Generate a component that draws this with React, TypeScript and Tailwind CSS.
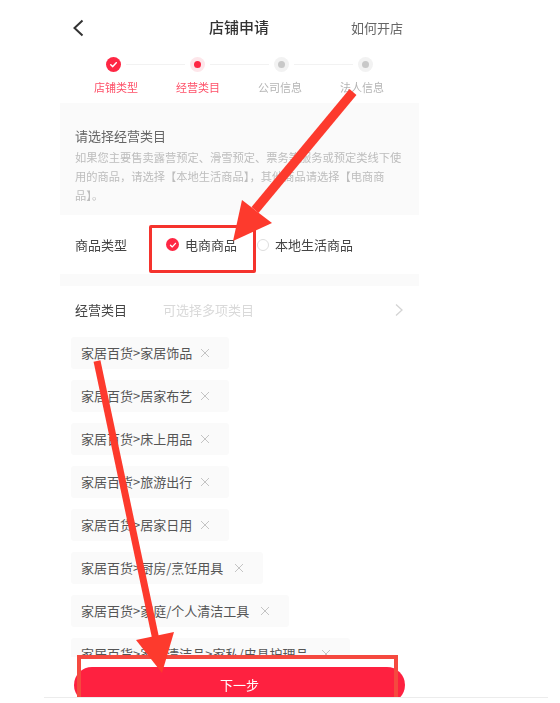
const chips = [
  { text: "家居百货>家居饰品", w: "w-[158px]" },
  { text: "家居百货>居家布艺", w: "w-[158px]" },
  { text: "家居百货>床上用品", w: "w-[158px]" },
  { text: "家居百货>旅游出行", w: "w-[158px]" },
  { text: "家居百货>居家日用", w: "w-[158px]" },
  { text: "家居百货>厨房/烹饪用具", w: "w-[192px]" },
  { text: "家居百货>家庭/个人清洁工具", w: "w-[218px]" },
  { text: "家居百货>家庭清洁品>家私/皮具护理品", w: "w-[279px]" },
]

const steps = [
  { label: "店铺类型", state: "done" },
  { label: "经营类目", state: "active" },
  { label: "公司信息", state: "todo" },
  { label: "法人信息", state: "todo" },
]

const Check = ({ size }: { size: number }) => (
  <svg width={size} height={size} viewBox="0 0 12 12" fill="none" stroke="white" strokeWidth="1.6" strokeLinecap="round" strokeLinejoin="round">
    <path d="M3 6.2 5.2 8.3 9 4" />
  </svg>
)

const Cross = () => (
  <svg width="10" height="10" viewBox="0 0 10 10" stroke="#c4c4c4" strokeWidth="1" className="shrink-0">
    <path d="M1 1 9 9M9 1 1 9" />
  </svg>
)

const StepDot = ({ state }: { state: string }) => {
  if (state === "done")
    return (
      <div className="flex h-[15px] w-[15px] shrink-0 items-center justify-center rounded-full bg-[#fe2744]">
        <Check size={11} />
      </div>
    )
  return (
    <div className={`flex h-[15px] w-[15px] shrink-0 items-center justify-center rounded-full ${state === "active" ? "bg-[#fde6ea]" : "bg-[#f2f2f2]"}`}>
      <div className={`h-[7px] w-[7px] rounded-full ${state === "active" ? "bg-[#fe2744]" : "bg-[#c8c8c8]"}`} />
    </div>
  )
}

export default function App() {
  return (
    <div className="relative h-[703px] w-[560px] overflow-hidden bg-white font-['Noto_Sans_CJK_SC','Liberation_Sans',sans-serif]">
      <div className="ml-[60px] flex h-[697px] w-[359px] flex-col overflow-hidden blur-[0.6px]">
        {/* nav bar */}
        <div className="flex h-[55px] shrink-0 items-center justify-between pl-[11px] pr-[16px]">
          <svg width="14" height="20" viewBox="0 0 14 20" fill="none" stroke="#333" strokeWidth="2">
            <path d="M11.5 2.5 3.5 10l8 7.5" />
          </svg>
          <span className="ml-[42px] text-[15px] font-medium text-[#333]">店铺申请</span>
          <span className="text-[13px] text-[#666]">如何开店</span>
        </div>

        {/* steps */}
        <div className="h-[48px] shrink-0 pt-[2px]">
          <div className="flex items-center pl-[46px]">
            {steps.map((step, i) => (
              <div key={step.label} className="flex items-center">
                <StepDot state={step.state} />
                {i < 3 && <div className="mx-[5px] h-px w-[59px] bg-[#f2f2f2]" />}
              </div>
            ))}
          </div>
          <div className="mt-[7px] flex gap-[38px] pl-[34px]">
            {steps.map((step, i) => (
              <span key={step.label} className={`w-[44px] whitespace-nowrap text-[11px] leading-[16px] ${i < 2 ? "text-[#fe5068]" : "text-[#b5b5b5]"}`}>
                {step.label}
              </span>
            ))}
          </div>
        </div>

        {/* notice */}
        <div className="h-[112px] shrink-0 bg-[#fafafa] px-[15px] pt-[24px]">
          <p className="text-[13px] leading-[18px] text-[#666]">请选择经营类目</p>
          <p className="mt-[3px] text-[11.25px] leading-[19px] text-[#bdbdbd]">
            如果您主要售卖露营预定、滑雪预定、票务等服务或预定类线下使用的商品，请选择【本地生活商品】，其他商品请选择【电商商品】。
          </p>
        </div>

        {/* goods type */}
        <div className="flex h-[59px] shrink-0 items-center px-[15px] text-[13px] text-[#444]">
          <span className="w-[91px]">商品类型</span>
          <div className="flex h-[13px] w-[13px] items-center justify-center rounded-full bg-[#fe2744]">
            <Check size={10} />
          </div>
          <span className="ml-[6px]">电商商品</span>
          <div className="ml-[20px] h-[12px] w-[12px] rounded-full border border-[#ddd]" />
          <span className="ml-[6px]">本地生活商品</span>
        </div>
        <div className="h-[12px] shrink-0 bg-[#fafafa]" />

        {/* category */}
        <div className="flex h-[51px] shrink-0 items-center px-[15px] pb-[3px] text-[13px]">
          <span className="w-[88px] text-[#444]">经营类目</span>
          <span className="flex-1 text-[#d9d9d9]">可选择多项类目</span>
          <svg width="10" height="14" viewBox="0 0 10 14" fill="none" stroke="#d4d4d4" strokeWidth="1.3">
            <path d="M2 1.5 8 7l-6 5.5" />
          </svg>
        </div>
        <div className="flex flex-col gap-[11px] pl-[11px]">
          {chips.map((chip) => (
            <div key={chip.text} className={`flex h-[32px] shrink-0 items-center justify-between rounded-[3px] bg-[#fafafa] pl-[10px] pr-[19px] text-[13px] text-[#555] ${chip.w}`}>
              <span className="whitespace-nowrap">{chip.text}</span>
              <Cross />
            </div>
          ))}
        </div>
      </div>

      {/* bottom action, overlays the list */}
      <div className="absolute left-0 top-[657px] h-[46px] w-full overflow-hidden bg-white">
        <div className="ml-[74px] mt-[10px] flex h-[36px] w-[331px] justify-center rounded-full bg-[#fe2140] pt-[9px] text-[13px] leading-[18px] text-white blur-[0.4px]">
          下一步
        </div>
      </div>
      <div className="absolute left-0 top-[697px] h-[6px] w-full bg-white">
        <div className="ml-[44px] h-px w-[504px] bg-[#ececec]" />
      </div>

      {/* annotations */}
      <div className="absolute left-[149px] top-[225px] h-[48px] w-[107px] rounded-[2px] border-[3px] border-[#f5332d] blur-[0.3px]" />
      <div className="absolute left-[77px] top-[655px] h-[42px] w-[321px] border-x-[4px] border-t-[4px] border-[#f5493f] blur-[0.3px]" />
      <svg className="absolute left-0 top-0 blur-[0.3px]" width="560" height="703" viewBox="0 0 560 703">
        <path d="M353 92 255 210" stroke="#fd3a2d" strokeWidth="9" />
        <path d="M242 200 272 223 233 241Z" fill="#fd3a2d" />
        <path d="M97 361 156 640" stroke="#fd3a2d" strokeWidth="7" />
        <path d="M136 640 174 632 162 673Z" fill="#fd3a2d" />
      </svg>
    </div>
  )
}
